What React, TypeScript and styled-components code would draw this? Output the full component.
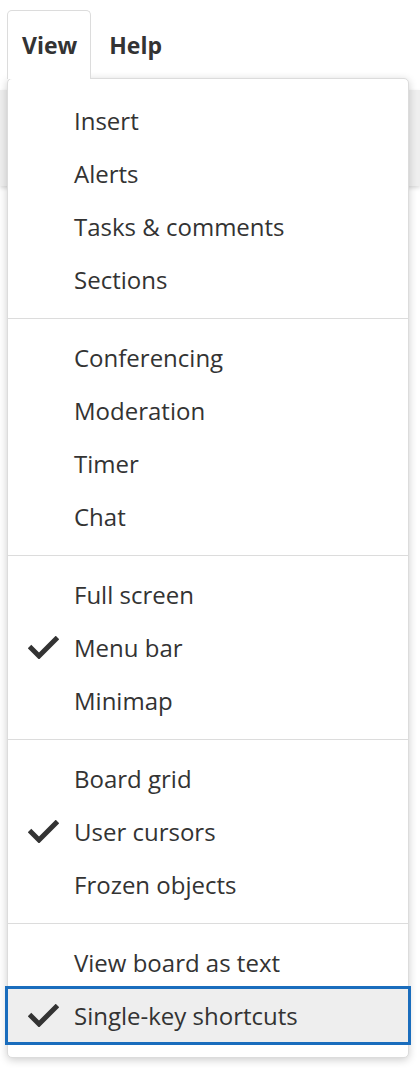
import styled, { createGlobalStyle } from "styled-components";

const GlobalStyle = createGlobalStyle`
    body {
        margin: 0;
        background: #ffffff;
        font-family: "Open Sans", "Noto Sans", sans-serif;
        color: #333333;
    }
`

interface Item {
    label: string;
    checked?: boolean;
    focused?: boolean;
}

const sections: Item[][] = [
    [{ label: 'Insert' }, { label: 'Alerts' }, { label: 'Tasks & comments' }, { label: 'Sections' }],
    [{ label: 'Conferencing' }, { label: 'Moderation' }, { label: 'Timer' }, { label: 'Chat' }],
    [{ label: 'Full screen' }, { label: 'Menu bar', checked: true }, { label: 'Minimap' }],
    [{ label: 'Board grid' }, { label: 'User cursors', checked: true }, { label: 'Frozen objects' }],
    [{ label: 'View board as text' }, { label: 'Single-key shortcuts', checked: true, focused: true }],
]

function Check() {
    return (
        <CheckIcon viewBox="0 0 31 23">
            <path d="M1.5 10.5 L11 20 L29.5 1.5" fill="none" stroke="#333" strokeWidth="5" />
        </CheckIcon>
    )
}

function App() {
    return (
        <>
            <GlobalStyle />
            <Page>
                <MenuBar>
                    <Tab $open>View</Tab>
                    <Tab>Help</Tab>
                </MenuBar>
                <Toolbar />
                <Dropdown>
                    {sections.map((section, i) => (
                        <Section key={i}>
                            {section.map(item => (
                                <MenuItem key={item.label} $focused={item.focused}>
                                    <Gutter>{item.checked && <Check />}</Gutter>
                                    {item.label}
                                </MenuItem>
                            ))}
                        </Section>
                    ))}
                </Dropdown>
            </Page>
        </>
    )
}

const Page = styled.div`
    position: relative;
    height: 1070px;
    overflow: hidden;
`

const MenuBar = styled.div`
    display: flex;
    align-items: flex-start;
    height: 78px;
    padding: 10px 0 0 7px;
    box-sizing: border-box;
`

const Tab = styled.div<{ $open?: boolean }>`
    position: relative;
    z-index: 2;
    height: 69px;
    display: flex;
    align-items: center;
    padding: 0 13px 0 14px;
    margin-right: 3px;
    box-sizing: border-box;
    font-size: 23px;
    font-weight: 700;
    color: #333;
    border: 1px solid ${p => p.$open ? '#dcdcdc' : 'transparent'};
    border-bottom: none;
    border-radius: 5px 5px 0 0;
    background: ${p => p.$open ? '#ffffff' : 'transparent'};
`

const Toolbar = styled.div`
    margin-top: 12px;
    height: 96px;
    background: #efefef;
    box-shadow: 0 2px 4px rgba(0, 0, 0, 0.15);
`

const Dropdown = styled.div`
    position: absolute;
    z-index: 1;
    top: 78px;
    left: 7px;
    width: 402px;
    box-sizing: border-box;
    padding: 3px 0;
    background: #ffffff;
    border: 1px solid #dcdcdc;
    border-radius: 5px;
    box-shadow: 0 2px 8px rgba(0, 0, 0, 0.2);
`

const Section = styled.div`
    padding: 12px 0;
    border-top: 1px solid #dcdcdc;
    &:first-child {
        border-top: none;
    }
`

const MenuItem = styled.div<{ $focused?: boolean }>`
    display: flex;
    align-items: center;
    height: 53px;
    font-size: 24px;
    color: #333;
    background: ${p => p.$focused ? '#eeeeee' : 'transparent'};
    outline: ${p => p.$focused ? '3px solid #1a6dbd' : 'none'};
    outline-offset: 0;
`

const Gutter = styled.span`
    display: flex;
    align-items: center;
    width: 31px;
    margin: 0 15px 0 20px;
`

const CheckIcon = styled.svg`
    width: 31px;
    height: 23px;
    display: block;
`

export default App;
